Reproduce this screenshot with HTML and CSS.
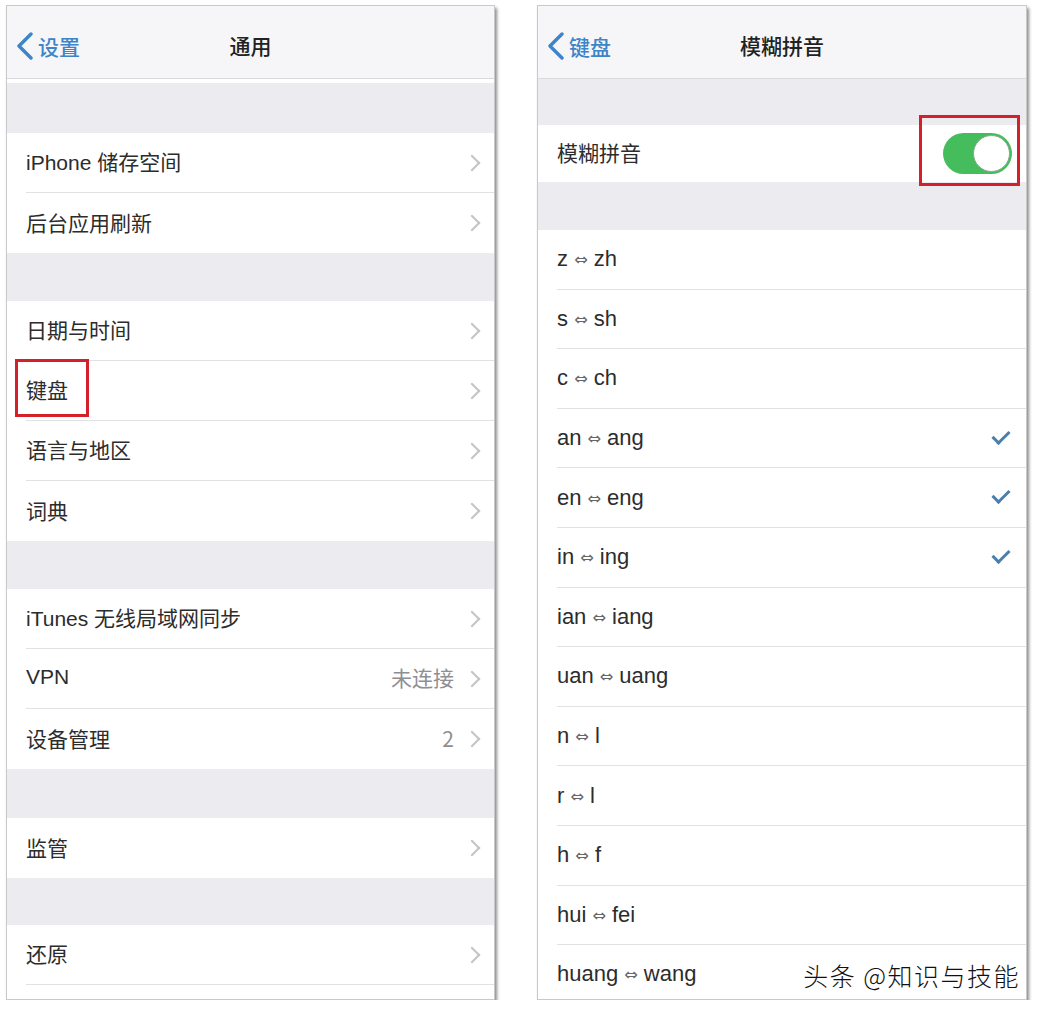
FILE: index.html
```html
<!DOCTYPE html>
<html lang="zh-CN">
<head>
    <meta charset="UTF-8">
    <meta name="viewport" content="width=device-width, initial-scale=1.0">
    <title>通用 / 模糊拼音</title>
    <link rel="stylesheet" href="styles.css">
</head>
<body>
    <div class="screen">
        <!-- left: settings > general -->
        <div class="panel panel-left">
            <div class="navbar">
                <span class="back">
                    <svg width="20" height="28" viewBox="0 0 20 28"><path d="M16 2 L4 14 L16 26" fill="none" stroke="#3d84c8" stroke-width="3.4" stroke-linecap="round" stroke-linejoin="round"/></svg>
                    设置
                </span>
                <span class="title">通用</span>
                <span></span>
            </div>
            <div class="strip"></div>
            <div class="gap gap-top"></div>
            <div class="group">
                <div class="row"><span class="label">iPhone 储存空间</span><span class="chev"></span></div>
                <div class="row last"><span class="label">后台应用刷新</span><span class="chev"></span></div>
            </div>
            <div class="gap"></div>
            <div class="group">
                <div class="row"><span class="label">日期与时间</span><span class="chev"></span></div>
                <div class="row"><span class="label">键盘</span><span class="chev"></span><span class="mark mark-kb"></span></div>
                <div class="row"><span class="label">语言与地区</span><span class="chev"></span></div>
                <div class="row last"><span class="label">词典</span><span class="chev"></span></div>
            </div>
            <div class="gap"></div>
            <div class="group">
                <div class="row"><span class="label">iTunes 无线局域网同步</span><span class="chev"></span></div>
                <div class="row"><span class="label">VPN</span><span class="value">未连接</span><span class="chev"></span></div>
                <div class="row last"><span class="label">设备管理</span><span class="value">2</span><span class="chev"></span></div>
            </div>
            <div class="gap gap-49"></div>
            <div class="group">
                <div class="row last"><span class="label">监管</span><span class="chev"></span></div>
            </div>
            <div class="gap gap-47"></div>
            <div class="group">
                <div class="row"><span class="label">还原</span><span class="chev"></span></div>
            </div>
        </div>

        <!-- right: keyboard > fuzzy pinyin -->
        <div class="panel panel-right">
            <div class="navbar">
                <span class="back">
                    <svg width="20" height="28" viewBox="0 0 20 28"><path d="M16 2 L4 14 L16 26" fill="none" stroke="#3d84c8" stroke-width="3.4" stroke-linecap="round" stroke-linejoin="round"/></svg>
                    键盘
                </span>
                <span class="title">模糊拼音</span>
                <span></span>
            </div>
            <div class="gap gap-46"></div>
            <div class="group">
                <div class="row row-switch last">
                    <span class="label">模糊拼音</span>
                    <span class="switch"><span class="knob"></span></span>
                    <span class="mark mark-switch"></span>
                </div>
            </div>
            <div class="gap"></div>
            <div class="group list">
                <div class="row"><span class="label">z <i>⇔</i> zh</span></div>
                <div class="row"><span class="label">s <i>⇔</i> sh</span></div>
                <div class="row"><span class="label">c <i>⇔</i> ch</span></div>
                <div class="row"><span class="label">an <i>⇔</i> ang</span><span class="check"></span></div>
                <div class="row"><span class="label">en <i>⇔</i> eng</span><span class="check"></span></div>
                <div class="row"><span class="label">in <i>⇔</i> ing</span><span class="check"></span></div>
                <div class="row"><span class="label">ian <i>⇔</i> iang</span></div>
                <div class="row"><span class="label">uan <i>⇔</i> uang</span></div>
                <div class="row"><span class="label">n <i>⇔</i> l</span></div>
                <div class="row"><span class="label">r <i>⇔</i> l</span></div>
                <div class="row"><span class="label">h <i>⇔</i> f</span></div>
                <div class="row"><span class="label">hui <i>⇔</i> fei</span></div>
                <div class="row"><span class="label">huang <i>⇔</i> wang</span></div>
            </div>
            <div class="watermark">头条 @知识与技能</div>
        </div>
    </div>
</body>
</html>
```

FILE: styles.css
```css
body {
    margin: 0;
    padding: 5px 0 0 6px;
    background-color: #fff;
    font-family: "Liberation Sans", "Noto Sans CJK SC", sans-serif;
    color: #2c2c2c;
}
.screen {
    display: flex;
    gap: 42px;
}
.panel {
    position: relative;
    height: 995px;
    box-sizing: border-box;
    border: 1px solid #c9c9c9;
    background-color: #fff;
    box-shadow: 2px 3px 3px rgba(0, 0, 0, 0.45);
    overflow: hidden;
}
.panel-left {
    width: 489px;
}
.panel-right {
    width: 490px;
}
.navbar {
    height: 72px;
    display: grid;
    grid-template-columns: 1fr auto 1fr;
    align-items: center;
    background-color: #f6f6f8;
    border-bottom: 1px solid #d9d9dc;
    padding: 0 8px;
}
.back {
    display: flex;
    align-items: center;
    gap: 3px;
    color: #3d84c8;
    font-family: "Noto Sans CJK SC", sans-serif;
    font-size: 21px;
    font-weight: 500;
    margin-top: 7px;
}
.title {
    font-family: "Noto Sans CJK SC", sans-serif;
    font-size: 21px;
    font-weight: 500;
    color: #222;
    margin-top: 6px;
}
.strip {
    height: 4px;
}
.gap {
    height: 48px;
    background-color: #ebebf0;
}
.gap-top {
    height: 50px;
}
.gap-46 {
    height: 46px;
}
.gap-47 {
    height: 47px;
}
.gap-49 {
    height: 49px;
}
.group {
    padding-left: 19px;
}
.row {
    position: relative;
    height: 60px;
    box-sizing: border-box;
    display: flex;
    align-items: center;
    padding-right: 10px;
    border-bottom: 1px solid #e2e2e5;
}
.row.last {
    border-bottom: none;
}
.label {
    flex: 1;
    font-size: 21px;
    margin-top: -3px;
}
.list .label {
    font-size: 22px;
    margin-top: 0;
}
.label i {
    font-style: normal;
    font-family: "DejaVu Sans", sans-serif;
    font-size: 16px;
    color: #666;
    vertical-align: 1px;
}
.value {
    font-family: "Noto Sans CJK SC", sans-serif;
    font-size: 21px;
    color: #8e8e93;
    margin: -3px 12px 0 0;
}
.chev {
    width: 10px;
    height: 10px;
    border-top: 2px solid #c4c4c8;
    border-right: 2px solid #c4c4c8;
    transform: rotate(45deg);
    margin-right: 6px;
}
.list .row {
    height: 59.6px;
}
.row-switch {
    height: 57px;
    padding-right: 14px;
}
.switch {
    position: relative;
    width: 69px;
    height: 41px;
    border-radius: 21px;
    background-color: #45bd5c;
}
.knob {
    position: absolute;
    top: 2px;
    right: 2px;
    width: 35px;
    height: 35px;
    border-radius: 50%;
    background-color: #fff;
    border: 1px solid #8fa293;
}
.check {
    width: 7px;
    height: 14px;
    border-right: 3px solid #4a7fab;
    border-bottom: 3px solid #4a7fab;
    transform: rotate(45deg);
    margin: -6px 10px 0 0;
}
.mark {
    position: absolute;
    border: 3px solid #d4202b;
    box-sizing: border-box;
}
.mark-kb {
    left: -11px;
    top: -2px;
    width: 74px;
    height: 58px;
}
.mark-switch {
    right: 6px;
    top: -10px;
    width: 101px;
    height: 71px;
}
.watermark {
    position: absolute;
    right: 6px;
    bottom: 6px;
    font-family: "Noto Sans CJK SC", sans-serif;
    font-size: 25px;
    font-weight: 300;
    letter-spacing: 1.5px;
    color: #111;
    text-shadow: 0 0 2px #fff, 0 0 2px #fff;
}
```
